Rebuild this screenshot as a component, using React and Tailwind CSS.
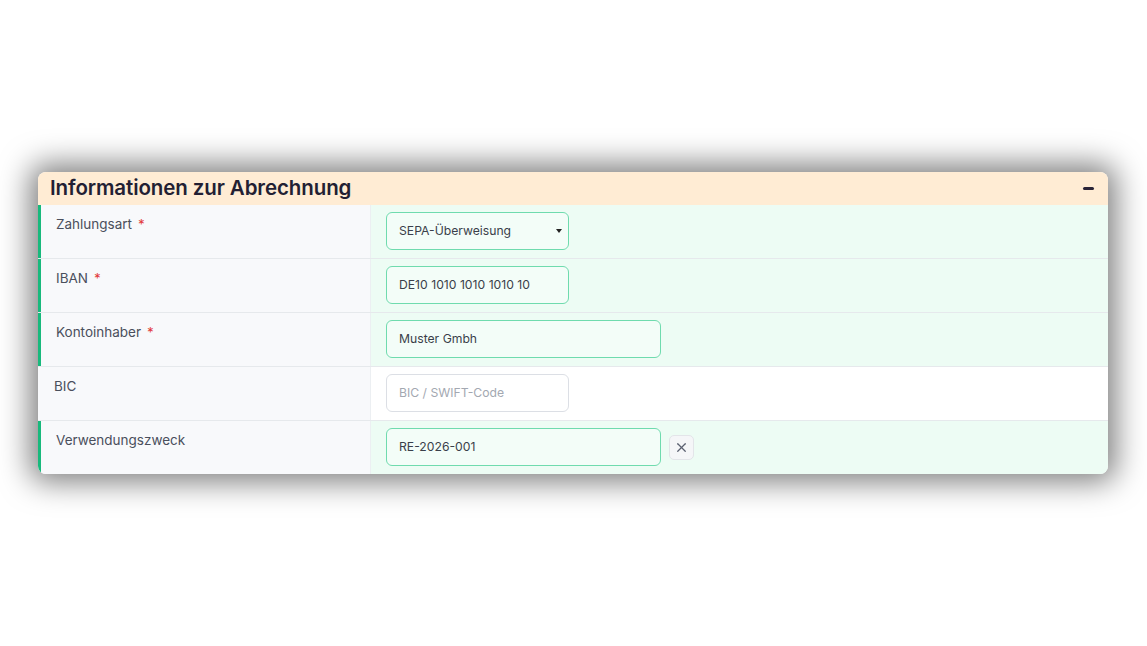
import { X } from 'lucide-react';

const rows = [
    { label: 'Zahlungsart', required: true, filled: true, kind: 'select', value: 'SEPA-Überweisung', width: 'w-[183px]' },
    { label: 'IBAN', required: true, filled: true, kind: 'input', value: 'DE10 1010 1010 1010 10', width: 'w-[183px]' },
    { label: 'Kontoinhaber', required: true, filled: true, kind: 'input', value: 'Muster Gmbh', width: 'w-[275px]' },
    { label: 'BIC', required: false, filled: false, kind: 'input', value: '', placeholder: 'BIC / SWIFT-Code', width: 'w-[183px]' },
    { label: 'Verwendungszweck', required: false, filled: true, kind: 'input', value: 'RE-2026-001', width: 'w-[275px]', clear: true },
];

export default function App() {
    return (
        <div className="min-h-screen bg-white pt-[172px] font-['Inter',sans-serif]">
            <div className="ml-[38px] w-[1070px] overflow-hidden rounded-lg shadow-[0_0_30px_8px_rgba(0,0,0,0.5)]">
                {/* Header */}
                <div className="flex h-[33px] items-center justify-between bg-[#ffecd4] pl-3 pr-[14px]">
                    <h2 className="text-[20.5px] font-semibold tracking-[-0.1px] text-[#231f33]">
                        Informationen zur Abrechnung
                    </h2>
                    <span className="block h-[3px] w-[11px] rounded-sm bg-[#2a2438]" />
                </div>

                {/* Rows */}
                {rows.map((row, i) => (
                    <div
                        key={row.label}
                        className={`flex ${i < rows.length - 1 ? 'border-b border-[#e6e9ec]' : ''}`}
                    >
                        <div
                            className={`w-[333px] shrink-0 border-r border-[#eceff2] bg-[#f8f9fb] pt-[9px] text-[13.5px] text-[#4a4f5c] ${
                                row.filled ? 'border-l-[3px] border-l-[#18b97c] pl-[15px]' : 'pl-[16px]'
                            }`}
                        >
                            {row.label}
                            {row.required && <span className="ml-[6px] text-[#e23b3b]">*</span>}
                        </div>
                        <div
                            className={`flex flex-1 items-center gap-2 pb-2 pl-[15px] pt-[7px] ${
                                row.filled ? 'bg-[#edfcf4]' : 'bg-white'
                            }`}
                        >
                            {row.kind === 'select' ? (
                                <div
                                    className={`${row.width} flex h-[38px] items-center justify-between rounded-md border border-[#6fdbae] bg-[#f3fdf8] pl-3 pr-[6px] text-[12.2px] text-[#3a3f4a]`}
                                >
                                    <span>{row.value}</span>
                                    <svg width="6" height="4" viewBox="0 0 6 4">
                                        <path d="M0 0h6L3 4z" fill="#222" />
                                    </svg>
                                </div>
                            ) : (
                                <div
                                    className={`${row.width} flex h-[38px] items-center rounded-md border pl-3 text-[12.2px] ${
                                        row.filled
                                            ? 'border-[#6fdbae] bg-[#f3fdf8] text-[#3a3f4a]'
                                            : 'border-[#dcdfe5] bg-white text-[#a3a8b1]'
                                    }`}
                                >
                                    {row.value || row.placeholder}
                                </div>
                            )}
                            {row.clear && (
                                <button
                                    type="button"
                                    className="flex h-[25px] w-[25px] items-center justify-center rounded-[5px] border border-[#e3e5e9] bg-[#f5f6f8] text-[#5b6070]"
                                >
                                    <X size={15} strokeWidth={2} />
                                </button>
                            )}
                        </div>
                    </div>
                ))}
            </div>
        </div>
    );
}
